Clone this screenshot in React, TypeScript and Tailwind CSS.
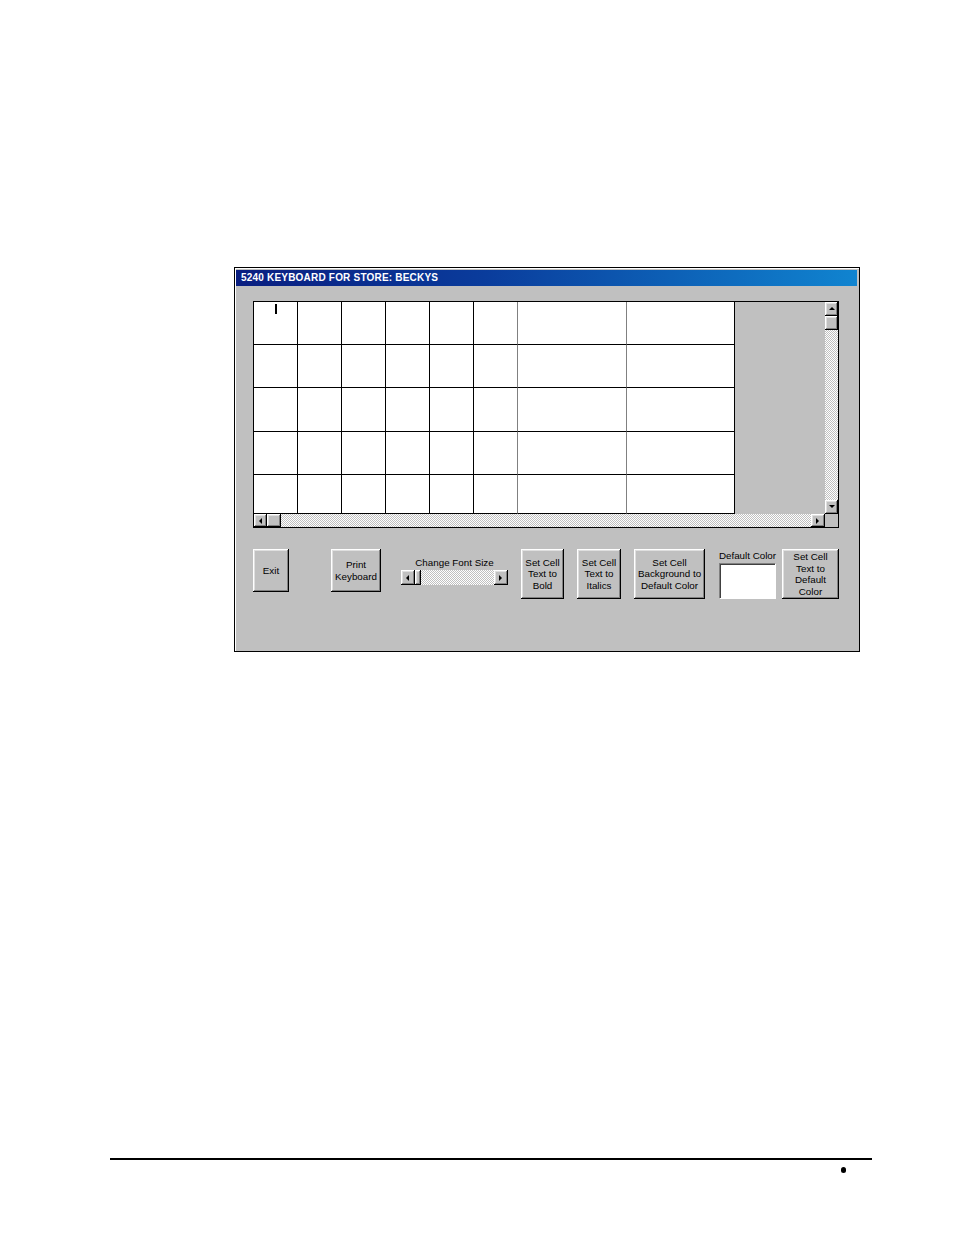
import React from 'react'

const bevel =
  'bg-[#c0c0c0] shadow-[inset_-1px_-1px_#000,inset_1px_1px_#fff,inset_-2px_-2px_#808080,inset_2px_2px_#dfdfdf]'
const track = 'bg-[repeating-conic-gradient(#c0c0c0_0_25%,#fff_0_50%)] bg-[length:2px_2px]'

const COLS = [44, 44, 44, 44, 44, 44, 109, 108]
const ROWS = [43, 43, 44, 43, 39]

function Arrow({ dir }: { dir: 'up' | 'down' | 'left' | 'right' }) {
  const pts = {
    up: '1,5 4,2 7,5',
    down: '1,2 4,5 7,2',
    left: '5,1 2,4 5,7',
    right: '2,1 5,4 2,7',
  }[dir]
  return (
    <svg width="8" height="8" viewBox="0 0 8 8">
      <polygon points={pts} fill="#000" />
    </svg>
  )
}

function ScrollBtn({ dir, className = '' }: { dir: 'up' | 'down' | 'left' | 'right'; className?: string }) {
  return (
    <div className={`${bevel} flex items-center justify-center ${className}`}>
      <Arrow dir={dir} />
    </div>
  )
}

function Btn({ w, h, lines, ml }: { w: number; h: number; lines: string[]; ml: string }) {
  return (
    <div
      className={`${bevel} ${ml} flex flex-col items-center justify-center text-[9.8px] leading-[11.5px] text-black`}
      style={{ width: w, height: h }}
    >
      {lines.map((l) => (
        <span key={l}>{l}</span>
      ))}
    </div>
  )
}

function Grid() {
  return (
    <div className="ml-[17px] mt-[15px] w-[586px] h-[227px] border border-black flex flex-col bg-[#c0c0c0]">
      <div className="flex h-[212px]">
        <div className="flex flex-col bg-white overflow-hidden">
          {ROWS.map((h, r) => (
            <div key={r} className="flex" style={{ height: h }}>
              {COLS.map((w, c) => (
                <div
                  key={c}
                  className={`relative border-b border-black ${
                    c === 5 || c === 6 ? 'border-r border-r-[#808080]' : 'border-r border-r-black'
                  }`}
                  style={{ width: w }}
                >
                  {r === 0 && c === 0 && (
                    <div className="absolute left-[21px] top-[2px] w-[2px] h-[10px] bg-black" />
                  )}
                </div>
              ))}
            </div>
          ))}
        </div>
        <div className="flex-1" />
        <div className="w-[13px] flex flex-col">
          <ScrollBtn dir="up" className="h-[14px]" />
          <div className={`${bevel} h-[14px]`} />
          <div className={`flex-1 ${track}`} />
          <ScrollBtn dir="down" className="h-[14px]" />
        </div>
      </div>
      <div className="flex h-[13px]">
        <ScrollBtn dir="left" className="w-[13px]" />
        <div className={`${bevel} w-[14px]`} />
        <div className={`flex-1 ${track}`} />
        <ScrollBtn dir="right" className="w-[14px]" />
        <div className="w-[13px] bg-[#c0c0c0]" />
      </div>
    </div>
  )
}

function Controls() {
  return (
    <div className="flex items-start mt-[21px] ml-[17px] font-['Liberation_Sans',Arial,sans-serif]">
      <Btn w={36} h={43} lines={['Exit']} ml="" />
      <Btn w={50} h={43} lines={['Print', 'Keyboard']} ml="ml-[42px]" />
      <div className="ml-[20px] w-[107px] flex flex-col items-center mt-[8px]">
        <span className="text-[9.8px] leading-[11px] text-black">Change Font Size</span>
        <div className="mt-[2px] w-[107px] h-[15px] flex">
          <ScrollBtn dir="left" className="w-[14px]" />
          <div className={`${bevel} w-[6px]`} />
          <div className={`flex-1 ${track}`} />
          <ScrollBtn dir="right" className="w-[14px]" />
        </div>
      </div>
      <Btn w={43} h={50} lines={['Set Cell', 'Text to', 'Bold']} ml="ml-[13px]" />
      <Btn w={44} h={50} lines={['Set Cell', 'Text to', 'Italics']} ml="ml-[13px]" />
      <Btn w={71} h={50} lines={['Set Cell', 'Background to', 'Default Color']} ml="ml-[13px]" />
      <div className="ml-[14px] w-[57px] flex flex-col items-center">
        <span className="text-[9.8px] leading-[11px] text-black mt-[1px] whitespace-nowrap">Default Color</span>
        <div className="mt-[2px] w-[57px] h-[36px] bg-white border-t border-l border-[#808080] border-r border-b border-r-white border-b-white shadow-[inset_1px_1px_#404040]" />
      </div>
      <Btn w={57} h={50} lines={['Set Cell', 'Text to', 'Default', 'Color']} ml="ml-[6px]" />
    </div>
  )
}

export default function App() {
  return (
    <div className="w-[954px] h-[1235px] bg-white relative font-['Liberation_Sans',Arial,sans-serif]">
      <div className="pt-[267px] pl-[234px]">
        <div className="w-[626px] h-[385px] border border-black bg-[#c0c0c0]">
          <div className="h-full border-t border-l border-white pr-[2px] pt-[1px]">
            <div className="h-[16px] bg-[linear-gradient(to_right,#0a1e80,#0a3c9c_40%,#1084d0)] flex items-center pl-[5px]">
              <span className="text-white font-bold text-[10px] tracking-[0.2px] leading-none">
                5240 KEYBOARD FOR STORE: BECKYS
              </span>
            </div>
            <Grid />
            <Controls />
          </div>
        </div>
      </div>
      <div className="mt-[506px] ml-[110px] w-[762px] h-[2px] bg-black" />
      <div className="ml-[841px] mt-[7px] w-[5px] h-[6px] rounded-full bg-black" />
    </div>
  )
}
